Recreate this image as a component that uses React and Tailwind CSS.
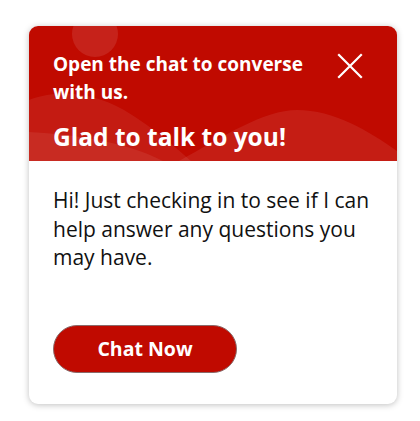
import React from 'react';

function CloseIcon() {
  return (
    <svg width="26" height="26" viewBox="0 0 26 26" fill="none" stroke="white" strokeWidth="2.2" strokeLinecap="square">
      <path d="M2 2 L24 24 M24 2 L2 24" />
    </svg>
  );
}

function HeaderDecor() {
  return (
    <svg className="absolute inset-0 w-full h-full pointer-events-none" viewBox="0 0 368 135" preserveAspectRatio="none">
      <circle cx="66" cy="8" r="23" fill="white" fillOpacity="0.1" />
      <path d="M0 74 C 25 64, 60 64, 95 84 C 125 102, 145 120, 162 135 L 0 135 Z" fill="white" fillOpacity="0.07" />
      <path d="M0 106 C 40 108, 95 115, 134 135 L 0 135 Z" fill="white" fillOpacity="0.07" />
      <path d="M150 135 C 195 110, 235 84, 268 84 C 305 84, 340 105, 368 125 L 368 135 Z" fill="white" fillOpacity="0.08" />
    </svg>
  );
}

export default function App() {
  return (
    <div className="w-[420px] h-[421px] bg-white p-[29px] pt-[26px] font-['Open_Sans',sans-serif]">
      <div className="w-[368px] rounded-[9px] overflow-hidden bg-white shadow-[0_1px_6px_rgba(0,0,0,0.25)]">
        {/* header */}
        <div className="relative h-[135px] bg-[#c00a00] pl-6 pr-[34px] pt-[24px]">
          <HeaderDecor />
          <div className="relative flex items-start justify-between">
            <p className="text-white font-bold text-[19px] leading-[28px] w-[270px]">
              Open the chat to converse with us.
            </p>
            <div className="mt-[3px]">
              <CloseIcon />
            </div>
          </div>
          <h2 className="relative text-white font-bold text-[24.5px] leading-[32px] mt-[15px]">
            Glad to talk to you!
          </h2>
        </div>
        {/* body */}
        <div className="px-6 pt-[25px] pb-[31px]">
          <p className="text-[#111] text-[21px] leading-[28.5px]">
            Hi! Just checking in to see if I can help answer any questions you may have.
          </p>
          <button className="mt-[53px] w-[184px] h-[48px] rounded-full bg-[#c00a00] border border-[#8a6a6a] text-white font-bold text-[19.5px]">
            Chat Now
          </button>
        </div>
      </div>
    </div>
  );
}
